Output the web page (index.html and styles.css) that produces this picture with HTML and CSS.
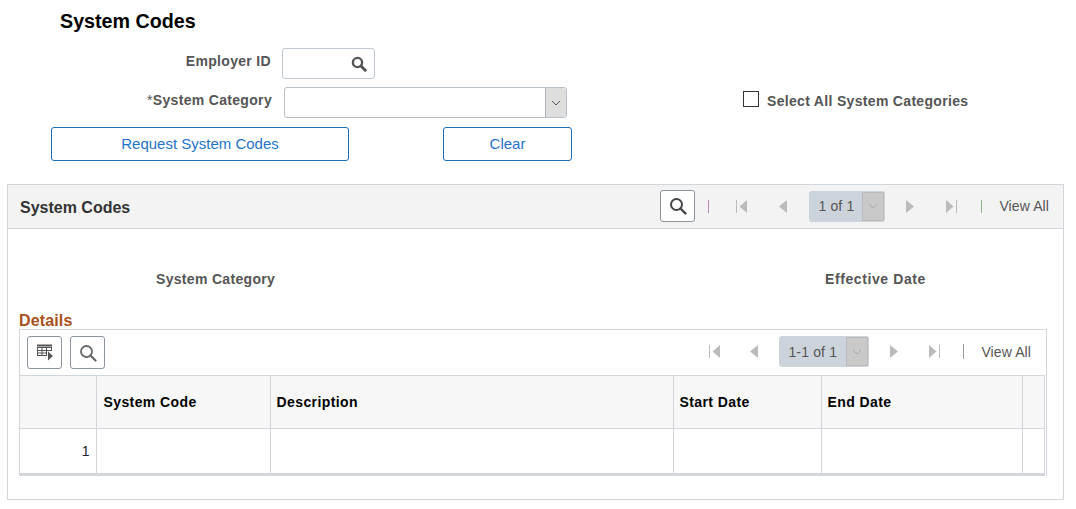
FILE: index.html
```html
<!DOCTYPE html>
<html lang="en">
<head>
<meta charset="utf-8">
<title>System Codes</title>
<link rel="stylesheet" href="styles.css">
</head>
<body>
<h1 class="title">System Codes</h1>
<div class="row row-emp">
  <label class="lbl lbl-emp">Employer ID</label>
  <div class="lookup">
    <svg class="lookup-ic" width="16" height="16" viewBox="0 0 16 16"><circle cx="6.5" cy="6.5" r="4.6" fill="none" stroke="#555" stroke-width="2.4"/><path d="M10 10l4.2 4.2" stroke="#555" stroke-width="3" stroke-linecap="round"/></svg>
  </div>
</div>
<div class="row row-cat">
  <label class="lbl lbl-cat"><span class="req">*</span>System Category</label>
  <div class="select">
    <span class="select-btn"><svg width="10" height="6" viewBox="0 0 10 6"><path d="M1 1l4 4 4-4" fill="none" stroke="#555" stroke-width="1"/></svg></span>
  </div>
  <span class="check"></span>
  <label class="lbl lbl-check">Select All System Categories</label>
</div>
<div class="row row-btn">
  <button class="btn btn-req">Request System Codes</button>
  <button class="btn btn-clear">Clear</button>
</div>

<section class="panel">
  <header class="panel-head">
    <h2 class="panel-title">System Codes</h2>
    <div class="pager pager-top">
      <span class="icon-btn"><svg width="18" height="18" viewBox="0 0 18 18"><circle cx="7.5" cy="7.5" r="5.5" fill="none" stroke="#444" stroke-width="2"/><path d="M11.5 11.5l5 5" stroke="#444" stroke-width="2.4" stroke-linecap="round"/></svg></span>
      <span class="sep sep-purple"></span>
      <svg class="nav nav-first" width="11" height="13" viewBox="0 0 11 13"><path d="M.5 0v13" stroke="#bbb" stroke-width="1"/><path d="M11 0v13L3.500 6.500z" fill="#bbb"/></svg>
      <svg class="nav nav-prev" width="8" height="13" viewBox="0 0 8 13"><path d="M8 0v13L0 6.500z" fill="#bbb"/></svg>
      <span class="range range-top"><span class="range-text">1 of 1</span><span class="range-btn"><svg width="10" height="6" viewBox="0 0 10 6"><path d="M1 1l4 4 4-4" fill="none" stroke="#aaa" stroke-width="1"/></svg></span></span>
      <svg class="nav nav-next" width="8" height="13" viewBox="0 0 8 13"><path d="M0 0v13L8 6.500z" fill="#bbb"/></svg>
      <svg class="nav nav-last" width="11" height="13" viewBox="0 0 11 13"><path d="M10.500 0v13" stroke="#bbb" stroke-width="1"/><path d="M0 0v13L7.500 6.500z" fill="#bbb"/></svg>
      <span class="sep sep-green"></span>
      <span class="view">View All</span>
    </div>
  </header>
  <div class="fields">
    <span class="lbl field-cat">System Category</span>
    <span class="lbl field-date">Effective Date</span>
  </div>
  <h3 class="details-title">Details</h3>
  <div class="grid-box">
    <div class="toolbar">
      <span class="icon-btn small"><svg width="18" height="17" viewBox="0 0 18 17"><path d="M1 1.500h15" stroke="#555" stroke-width="2"/><path d="M1.500 3v8M6 3v8M10.500 3v8M15.500 3v3M1 3.500h15M1 6.500h15M1 9h10M1 11.500h10" stroke="#555" stroke-width="1" fill="none"/><path d="M12 7.500v9l5-4.500z" fill="#555"/></svg></span>
      <span class="icon-btn small"><svg width="18" height="18" viewBox="0 0 18 18"><circle cx="7.500" cy="7.500" r="5.500" fill="none" stroke="#666" stroke-width="1.800"/><path d="M11.500 11.500l5 5" stroke="#666" stroke-width="2.200" stroke-linecap="round"/></svg></span>
      <div class="pager pager-grid">
        <svg class="nav nav-first" width="11" height="13" viewBox="0 0 11 13"><path d="M.5 0v13" stroke="#bbb" stroke-width="1"/><path d="M11 0v13L3.500 6.500z" fill="#bbb"/></svg>
        <svg class="nav nav-prev" width="8" height="13" viewBox="0 0 8 13"><path d="M8 0v13L0 6.500z" fill="#bbb"/></svg>
        <span class="range range-grid"><span class="range-text">1-1 of 1</span><span class="range-btn"><svg width="10" height="6" viewBox="0 0 10 6"><path d="M1 1l4 4 4-4" fill="none" stroke="#aaa" stroke-width="1"/></svg></span></span>
        <svg class="nav nav-next" width="8" height="13" viewBox="0 0 8 13"><path d="M0 0v13L8 6.500z" fill="#bbb"/></svg>
        <svg class="nav nav-last" width="11" height="13" viewBox="0 0 11 13"><path d="M10.500 0v13" stroke="#bbb" stroke-width="1"/><path d="M0 0v13L7.500 6.500z" fill="#bbb"/></svg>
        <span class="sep sep-gray"></span>
        <span class="view">View All</span>
      </div>
    </div>
    <table class="tbl">
      <colgroup><col class="c0"><col class="c1"><col class="c2"><col class="c3"><col class="c4"><col class="c5"></colgroup>
      <thead><tr><th></th><th class="th-code">System Code</th><th>Description</th><th>Start Date</th><th>End Date</th><th></th></tr></thead>
      <tbody><tr><td class="num">1</td><td></td><td></td><td></td><td></td><td></td></tr></tbody>
    </table>
  </div>
</section>
</body>
</html>
```
FILE: styles.css
```css
* { box-sizing: border-box; }
body { margin: 0; background: #fff; font-family: "Liberation Sans", Arial, sans-serif; font-size: 14px; color: #333; }
.title { margin: 0; padding: 10px 0 0 60px; height: 48px; font-size: 19.7px; line-height: 22px; font-weight: bold; color: #000; }
.row { display: flex; align-items: flex-start; }
.lbl { font-size: 14px; line-height: 16px; font-weight: bold; color: #555; letter-spacing: .32px; }
.req { font-weight: normal; }
.row-emp { height: 39px; }
.lbl-emp { width: 271px; text-align: right; margin-top: 5px; }
.lookup { width: 93px; height: 31px; margin-left: 11px; border: 1px solid #c0c7d0; border-radius: 3px; background: #fff; display: flex; justify-content: flex-end; align-items: center; padding-right: 7px; }
.row-cat { height: 40px; }
.lbl-cat { width: 272px; text-align: right; margin-top: 5px; }
.select { width: 283px; height: 31px; margin-left: 12px; border: 1px solid #b9c0c8; border-radius: 3px; background: #fff; display: flex; justify-content: flex-end; }
.select-btn { width: 21px; height: 29px; background: #dedede; border-left: 1px solid #a9b0b8; border-radius: 0 2px 2px 0; display: flex; align-items: center; justify-content: center; }
.check { width: 16px; height: 16px; margin: 4px 0 0 176px; border: 1px solid #333; background: #fff; }
.lbl-check { margin: 6px 0 0 8px; }
.row-btn { height: 57px; }
.btn { height: 34px; font: 15px/16px "Liberation Sans", Arial, sans-serif; color: #1f73c9; background: #fff; border: 1px solid #1f6fb8; border-radius: 3px; padding: 0; }
.btn-req { width: 298px; margin-left: 51px; }
.btn-clear { width: 129px; margin-left: 94px; }
.panel { width: 1057px; height: 316px; margin-left: 7px; border: 1px solid #d2d6db; }
.panel-head { height: 44px; background: #f3f3f3; border-bottom: 1px solid #d2d6db; display: flex; align-items: center; justify-content: space-between; padding: 0 14px 1px 12px; }
.panel-title { margin: 3px 0 0; font-size: 16px; line-height: 18px; font-weight: bold; color: #333; }
.pager { display: flex; align-items: center; font-size: 14px; color: #555; }
.icon-btn { width: 35px; height: 32px; background: #fff; border: 1px solid #8d949c; border-radius: 3px; display: flex; align-items: center; justify-content: center; }
.icon-btn.small { height: 33px; }
.sep { width: 1px; height: 13px; display: block; }
.sep-purple { background: #b58ab5; margin-left: 13px; }
.sep-green { background: #8fb58f; margin-left: 24px; }
.sep-gray { background: #98a0a8; height: 15px; margin-left: 23px; }
.nav { display: block; flex: none; }
.pager-top .nav-first { margin-left: 27px; }
.pager-top .nav-prev { margin-left: 32px; }
.range { display: flex; align-items: center; height: 31px; background: #cdd3da; border-radius: 3px; padding-left: 9px; color: #555; justify-content: space-between; letter-spacing: .15px; }
.range-btn { width: 22px; height: 29px; margin-right: 1px; background: #c9c9c9; border: 1px solid #bbb; display: flex; align-items: center; justify-content: center; }
.range-top { width: 76px; margin-left: 22px; }
.pager-top .nav-next { margin-left: 21px; }
.pager-top .nav-last { margin-left: 32px; }
.view { margin-left: 17px; color: #555; line-height: 16px; letter-spacing: .1px; }
.fields { height: 84px; display: flex; padding: 42px 0 0 148px; }
.field-cat { width: 669px; }
.field-date { letter-spacing: .6px; }
.details-title { margin: 0 0 0 11px; font-size: 16px; line-height: 16px; height: 16px; font-weight: bold; color: #a8501a; letter-spacing: .15px; }
.grid-box { width: 1028px; height: 147px; margin-left: 11px; border: 1px solid #d2d6db; border-bottom: 0; }
.toolbar { height: 45px; display: flex; align-items: flex-start; padding: 6px 0 0 7px; gap: 8px; }
.pager-grid { margin-left: auto; padding-right: 15px; height: 31px; }
.pager-grid .nav-prev { margin-left: 30px; }
.pager-grid .range-grid { width: 90px; margin-left: 21px; }
.pager-grid .nav-next { margin-left: 21px; }
.pager-grid .nav-last { margin-left: 31px; }
.pager-grid .view { margin-left: 17px; }
.tbl { width: 1024px; border-collapse: collapse; table-layout: fixed; border-bottom: 3px solid #d2d6db; }
.c0 { width: 76px; } .c1 { width: 174px; } .c2 { width: 403px; } .c3 { width: 148px; } .c4 { width: 201px; } .c5 { width: 22px; }
.tbl th, .tbl td { border: 1px solid #d2d6db; padding: 0 6px; }
.tbl tr > :first-child { border-left: 0; }
.tbl th { height: 53px; background: #f7f7f7; text-align: left; font-size: 14px; color: #000; font-weight: bold; letter-spacing: .4px; }
.tbl .th-code { padding-left: 7px; }
.tbl td { height: 46px; }
.tbl .num { text-align: right; color: #222; }
```
